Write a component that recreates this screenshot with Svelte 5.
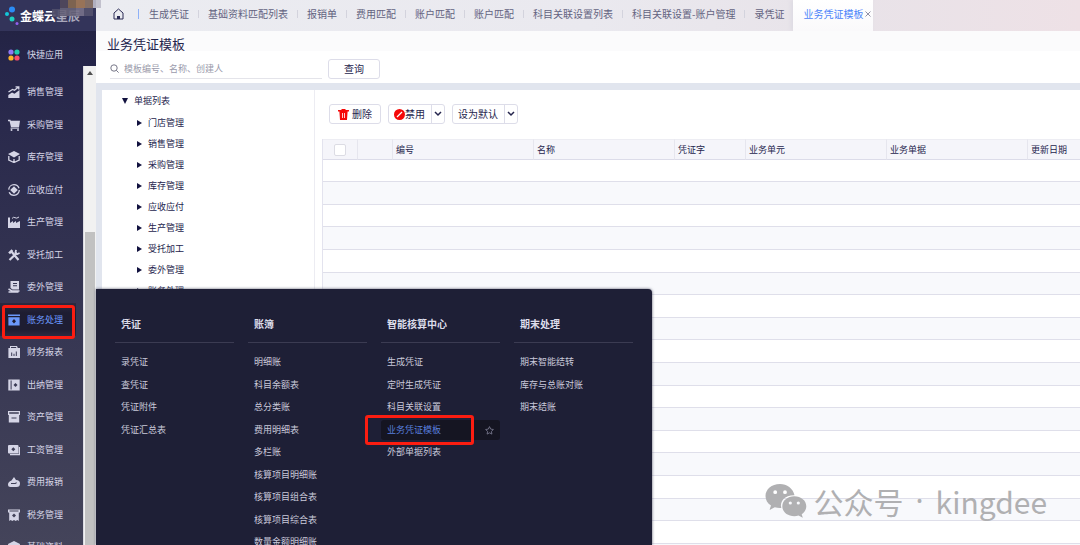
<script lang="ts">
  interface MenuGroup {
    title: string;
    items: string[];
  }

  const tabs = [
    '生成凭证',
    '基础资料匹配列表',
    '报销单',
    '费用匹配',
    '账户匹配',
    '账户匹配',
    '科目关联设置列表',
    '科目关联设置-账户管理',
    '录凭证'
  ];

  const modules = [
    { name: '销售管理', icon: 'sales' },
    { name: '采购管理', icon: 'cart' },
    { name: '库存管理', icon: 'box' },
    { name: '应收应付', icon: 'cycle' },
    { name: '生产管理', icon: 'factory' },
    { name: '受托加工', icon: 'tools' },
    { name: '委外管理', icon: 'hand' },
    { name: '账务处理', icon: 'ledger' },
    { name: '财务报表', icon: 'report' },
    { name: '出纳管理', icon: 'safe' },
    { name: '资产管理', icon: 'archive' },
    { name: '工资管理', icon: 'wage' },
    { name: '费用报销', icon: 'expense' },
    { name: '税务管理', icon: 'tax' },
    { name: '基础资料', icon: 'base' }
  ];

  const tree = [
    '门店管理',
    '销售管理',
    '采购管理',
    '库存管理',
    '应收应付',
    '生产管理',
    '受托加工',
    '委外管理',
    '账务处理'
  ];

  const groups: MenuGroup[] = [
    { title: '凭证', items: ['录凭证', '查凭证', '凭证附件', '凭证汇总表'] },
    {
      title: '账簿',
      items: [
        '明细账',
        '科目余额表',
        '总分类账',
        '费用明细表',
        '多栏账',
        '核算项目明细账',
        '核算项目组合表',
        '核算项目综合表',
        '数量金额明细账'
      ]
    },
    {
      title: '智能核算中心',
      items: ['生成凭证', '定时生成凭证', '科目关联设置', '业务凭证模板', '外部单据列表']
    },
    { title: '期末处理', items: ['期末智能结转', '库存与总账对账', '期末结账'] }
  ];

  const columns = ['编号', '名称', '凭证字', '业务单元', '业务单据', '更新日期'];
  const emptyRows = Array.from({ length: 18 }, (_, i) => i);

  let activeModule = $state('账务处理');
  let activePage = $state('业务凭证模板');
  let keyword = $state('');
  let allChecked = $state(false);
</script>

{#snippet moduleIcon(name: string)}
  <svg class="icon" width="12" height="12" viewBox="0 0 12 12" fill="currentColor" aria-hidden="true">
    {#if name === 'sales'}
      <path d="M.3 12V9L4 6.500l2.500 1.200L11.500 4v8z" />
      <path d="M.5 6 4.500 3.500l2 .8L10.500 1M7.500 .8H10.800V3.500" fill="none" stroke="currentColor" stroke-width="1.300" />
    {:else if name === 'cart'}
      <path d="M0 .8h2.400l.4 1H12l-1 6.400H3L1.600 2.200H0z" />
      <path d="M2.500 9.200H11" stroke="currentColor" />
      <circle cx="3.500" cy="11" r="1" /><circle cx="10" cy="11" r="1" />
    {:else if name === 'box'}
      <path d="M6 0 12 3 6 6.500 0 3z" />
      <path d="M.8 5v4L6 11.500 11.200 9V5M6 8v3.500" fill="none" stroke="currentColor" stroke-width="1.300" />
    {:else if name === 'cycle'}
      <circle cx="6" cy="6" r="5.300" fill="none" stroke="currentColor" stroke-width="1.300" stroke-dasharray="14 2.600" />
      <path d="M6 2.200 9.800 6 6 9.800 2.200 6z" />
    {:else if name === 'factory'}
      <path d="M0 12V1.500h2V7l3-2v2l3-2v2l4-2v7z" />
      <path d="M4 2.500q1.500-2 3-.8T11 1" fill="none" stroke="currentColor" />
    {:else if name === 'tools'}
      <path d="M1.500 11 9 3.800M3 2l7.500 9" stroke="currentColor" stroke-width="2.200" />
      <path d="M.2 3.500 3.500.2 5.200 2 2 5.200z" />
      <path d="M8 .8 7.400 4 9 5.200 11.600 4" fill="none" stroke="currentColor" stroke-width="1.800" />
    {:else if name === 'hand'}
      <path fill-rule="evenodd" d="M2.500 0H11v8.500H4.500L2.500 7zm2.500 2v1h4V2zm0 2.300v1h4v-1z" />
      <path d="M.5 8 4 10h7.500M.5 10.900h10" fill="none" stroke="currentColor" stroke-width="1.500" />
    {:else if name === 'ledger'}
      <path d="M0 .5h12V2H0z" />
      <path fill-rule="evenodd" d="M.4 3.200h11.200v8.300H.4zM6 5 4 7.200l2 2.200 2-2.200z" />
    {:else if name === 'report'}
      <path fill-rule="evenodd" d="M2 0h7l.8 2H12v10H.4V2H2zm1.200 6.500V10h1V6.500zm2.300 1.200V10h1V7.700zM7.800 5.500V10h1V5.500zM3 1v1h5.400L8 1z" />
    {:else if name === 'safe'}
      <path fill-rule="evenodd" d="M.3.5h11.400v11H.3zM2.600 1.500v9h1v-9zM7.500 4 5.500 6l2 2 2-2z" />
    {:else if name === 'archive'}
      <path d="M.6.6h10.800v2.800H.6z" fill="none" stroke="currentColor" stroke-width="1.200" />
      <path fill-rule="evenodd" d="M.8 4h10.400v7.500H.8zm2.700 2.500v1h5v-1z" />
    {:else if name === 'wage'}
      <path fill-rule="evenodd" d="M1 1h8.500q1 0 1 1v7.500H1q-1 0-1-1V2q0-1 1-1zM5.300 3.300l-2 2 2 2 2-2z" />
      <path d="M2 10.700h9.400V3" fill="none" stroke="currentColor" stroke-width="1.200" />
    {:else if name === 'expense'}
      <path fill-rule="evenodd" d="M3.500 4.500 6 1l2 3q4 0 4 3.500T8.500 11h-6Q0 11 0 8.500t3.500-4zM3 7v1h4.500l1.500-1-.6-.8L7 7z" />
    {:else if name === 'tax'}
      <path fill-rule="evenodd" d="M0 .5h12v3h-1.200V12L9.300 11l-1.600 1L6 11l-1.700 1-1.600-1-1.500 1V3.500H0zM1.500 1.600v.8h9v-.8zM6 4.500l-2 2 2 2 2-2z" />
    {:else}
      <path d="M6 0l6 3-1 8H1L0 3z" />
    {/if}
  </svg>
{/snippet}

{#snippet chevron()}
  <svg width="8" height="6" viewBox="0 0 8 6" fill="none" stroke="currentColor" stroke-width="1.500" aria-hidden="true">
    <path d="M1 1l3 3 3-3" />
  </svg>
{/snippet}

<div class="app">
  <aside class="sidebar">
    <div class="brand">
      <svg width="14" height="20" viewBox="0 0 14 20" aria-hidden="true">
        <circle cx="7" cy="3.500" r="3" fill="#2b8cf5" />
        <circle cx="2" cy="8" r="2" fill="#14c6d8" />
        <circle cx="7" cy="13" r="2.500" fill="#1fd0c0" />
        <circle cx="12" cy="17.500" r="1.500" fill="#9160ee" />
      </svg>
      <strong>金蝶云<span>星辰</span></strong>
      <svg class="mosaic" width="50" height="24" viewBox="0 0 50 24" aria-hidden="true">
        <path fill="#51506c" d="M0 9h8v8H0z" />
        <path fill="#51485c" d="M8 0h8v8H8z" />
        <path fill="#86694f" d="M16 0h8v8h-8z" />
        <path fill="#a37a58" d="M24 0h9v8h-9z" />
        <path fill="#8d7668" d="M33 0h8v8h-8z" />
        <path fill="#bebdca" d="M41 0h8v8h-8z" />
        <path fill="#67637a" d="M8 8h16v8H8z" />
        <path fill="#77728a" d="M24 8h8v8h-8z" />
        <path fill="#55536e" d="M32 8h9v8h-9z" />
      </svg>
    </div>
    <a class="module quick" href="#apps">
      <svg class="icon" width="12" height="12" viewBox="0 0 12 12" aria-hidden="true">
        <circle cx="3" cy="3" r="2.600" fill="#8d78f5" />
        <circle cx="9" cy="3" r="2.600" fill="#1fcbb0" />
        <circle cx="3" cy="9" r="2.600" fill="#fbb429" />
        <circle cx="9" cy="9" r="2.600" fill="#fa4d6c" />
      </svg>
      快捷应用
    </a>
    <div class="module-area">
      <nav class="modules" aria-label="模块">
        {#each modules as item}
          <a
            class="module"
            class:active={item.name === activeModule}
            href="#{item.icon}"
            onclick={() => (activeModule = item.name)}
          >
            {@render moduleIcon(item.icon)}
            {item.name}
          </a>
        {/each}
      </nav>
      <div class="scrollbar">
        <svg width="6" height="4" viewBox="0 0 6 4" aria-hidden="true"><path fill="#505050" d="M3 0l3 4H0z" /></svg>
        <div class="thumb"></div>
      </div>
    </div>
  </aside>

  <main class="main">
    <nav class="tabs" aria-label="标签页">
      <button type="button" class="home" aria-label="首页">
        <svg width="11" height="12" viewBox="0 0 11 12" fill="none" stroke="#2a2a55" aria-hidden="true">
          <path d="M1 5 5.500 1 10 5v6H1z" stroke-linejoin="round" />
          <path d="M4 8h3v3H4z" fill="#2a2a55" stroke="none" />
        </svg>
      </button>
      <span class="bar first"></span>
      {#each tabs as tab, i}
        {#if i > 0}<span class="bar"></span>{/if}
        <button type="button" class="tab">{tab}</button>
      {/each}
      <div class="tab-current">
        <button type="button" class="tab">业务凭证模板</button>
        <button type="button" class="close" aria-label="关闭">
          <svg width="6" height="6" viewBox="0 0 6 6" stroke="#85859b" stroke-width=".9" aria-hidden="true">
            <path d="M.5.5l5 5M5.500.5l-5 5" />
          </svg>
        </button>
      </div>
    </nav>

    <header class="page-head">
      <h1>业务凭证模板</h1>
      <form class="search" onsubmit={(e) => e.preventDefault()}>
        <label class="field">
          <svg width="9" height="9" viewBox="0 0 9 9" fill="none" stroke="#777788" aria-hidden="true">
            <circle cx="4" cy="4" r="3.200" /><path d="M6.300 6.300 8.600 8.600" />
          </svg>
          <input type="text" placeholder="模板编号、名称、创建人" aria-label="搜索" bind:value={keyword} />
        </label>
        <button type="submit" class="btn query">查询</button>
      </form>
    </header>

    <div class="workspace">
      <section class="tree">
        <button type="button" class="node root">
          <svg width="6" height="6" viewBox="0 0 6 6" aria-hidden="true"><path fill="#12123f" d="M0 0h6L3 6z" /></svg>
          单据列表
        </button>
        {#each tree as node}
          <button type="button" class="node">
            <svg width="5" height="6" viewBox="0 0 5 6" aria-hidden="true"><path fill="#12123f" d="M0 0v6l5-3z" /></svg>
            {node}
          </button>
        {/each}
      </section>

      <section class="list">
        <div class="toolbar">
          <button type="button" class="btn">
            <svg width="11" height="11" viewBox="0 0 11 11" aria-hidden="true">
              <path fill="#f50808" fill-rule="evenodd" d="M3.500 0h4v1H11v1.500H9.600L9 11H2L1.400 2.500H0V1h3.500zM4 4v5h.8V4zm2.200 0v5H7V4z" />
            </svg>
            删除
          </button>
          <div class="split">
            <button type="button" class="ban">
              <svg width="11" height="11" viewBox="0 0 11 11" aria-hidden="true">
                <circle cx="5.500" cy="5.500" r="5.500" fill="#f50808" />
                <path d="M3 8l5-5" stroke="#fff" stroke-width="1.200" />
              </svg>
              禁用
            </button>
            <button type="button" class="more" aria-label="更多禁用操作">{@render chevron()}</button>
          </div>
          <div class="split">
            <button type="button">设为默认</button>
            <button type="button" class="more" aria-label="更多默认操作">{@render chevron()}</button>
          </div>
        </div>

        <table>
          <colgroup>
            <col class="w-check" />
            <col class="w-check" />
            <col class="w-wide" />
            <col class="w-wide" />
            <col class="w-narrow" />
            <col class="w-wide" />
            <col class="w-wide" />
            <col />
          </colgroup>
          <thead>
            <tr>
              <th class="check"><input type="checkbox" aria-label="全选" bind:checked={allChecked} /></th>
              <th></th>
              {#each columns as column}
                <th>{column}</th>
              {/each}
            </tr>
          </thead>
          <tbody>
            {#each emptyRows as row (row)}
              <tr><td colspan="8"></td></tr>
            {/each}
          </tbody>
        </table>
      </section>
    </div>

    <!-- Flyout of the active module -->
    <div class="flyout">
      {#each groups as group}
        <section>
          <h2>{group.title}</h2>
          <ul>
            {#each group.items as item}
              <li class:current={item === activePage}>
                <a href="#page" onclick={() => (activePage = item)}>{item}</a>
                {#if item === activePage}
                  <button type="button" class="star" aria-label="收藏">
                    <svg width="9" height="9" viewBox="0 0 9 9" fill="none" stroke="currentColor" stroke-width=".9" aria-hidden="true">
                      <path d="M4.500.6l1.200 2.500 2.700.4-2 1.900.5 2.700-2.400-1.300-2.400 1.300.5-2.700-2-1.900 2.700-.4z" />
                    </svg>
                  </button>
                  <span class="mark page-mark"></span>
                {/if}
              </li>
            {/each}
          </ul>
        </section>
      {/each}
    </div>

    <div class="watermark">
      <svg width="42" height="34" viewBox="0 0 42 34" aria-hidden="true">
        <path fill="#b0b0b2" fill-rule="evenodd" d="M15 0C6.500 0 .5 5.500.5 12c0 4 2 7.300 5.500 9.600L4.500 26l5.300-2.700c1.700.5 3.400.8 5.200.8h1.300C14.500 17 20 11 29.500 11.200 28 4.500 22 0 15 0zM10.200 6.300a1.900 1.900 0 1 1 0 3.800 1.900 1.900 0 0 1 0-3.800zm9.800 0a1.900 1.900 0 1 1 0 3.800 1.900 1.900 0 0 1 0-3.800z" />
        <path fill="#b0b0b2" fill-rule="evenodd" d="M29.300 12.200c-6.800 0-12 4.400-12 10 0 5.700 5.200 10 12 10 1.500 0 2.900-.2 4.200-.6l4.300 2.200-1.100-3.600c2.900-2 4.600-4.800 4.600-8 0-5.600-5.200-10-12-10zm-4 5.200a1.600 1.600 0 1 1 0 3.200 1.600 1.600 0 0 1 0-3.200zm8 0a1.600 1.600 0 1 1 0 3.200 1.600 1.600 0 0 1 0-3.200z" />
      </svg>
      <p><span>公众号</span><span class="dot">·</span><span>kingdee</span></p>
    </div>
  </main>
  <span class="mark module-mark"></span>
</div>

<style>
  :global(body) {
    margin: 0;
    overflow: hidden;
  }

  .app {
    position: relative;
    display: flex;
    height: 100vh;
    overflow: hidden;
    background: #e1e5ee;
    color: #25254d;
    font-family: "Noto Sans CJK SC", sans-serif;
    font-size: 9px;
    line-height: 14px;
  }

  .app :global(*) {
    box-sizing: border-box;
  }

  svg {
    display: block;
    flex-shrink: 0;
  }

  button {
    padding: 0;
    border: 0;
    background: none;
    color: inherit;
    font: inherit;
    white-space: nowrap;
    cursor: pointer;
  }

  a {
    color: inherit;
    text-decoration: none;
  }

  /* Sidebar */
  .sidebar {
    display: flex;
    flex: 0 0 96px;
    flex-direction: column;
    background: linear-gradient(#21213f, #26264a 12%, #44445a);
    color: #d5d5e6;
  }

  .brand {
    position: relative;
    z-index: 3;
    display: flex;
    flex: 0 0 31px;
    align-items: center;
    gap: 1px;
    padding-left: 5px;
    background: #33345a;
    color: #fff;
    font-size: 12px;
    line-height: 18px;
  }

  .brand strong {
    white-space: nowrap;
  }

  .brand span {
    color: #a9a8bb;
  }

  .mosaic {
    position: absolute;
    top: 0;
    left: 52px;
    opacity: 0.9;
  }

  .module {
    display: flex;
    flex-shrink: 0;
    align-items: center;
    gap: 7px;
    height: 32px;
    padding-left: 8px;
    white-space: nowrap;
  }

  .module:nth-child(even) {
    height: 33px;
  }

  .module.quick {
    height: 35px;
    padding-top: 12px;
  }

  .module.active {
    background: linear-gradient(#2b2a41, #1e1d32 30%, #1e1d32 80%, #2b2a41);
    color: #6b98fa;
  }

  .module-area {
    display: flex;
    flex: 1;
    min-height: 0;
  }

  .modules {
    display: flex;
    flex: 1;
    flex-direction: column;
    padding: 10px 7px 0 0;
    overflow: hidden;
  }

  .scrollbar {
    display: flex;
    flex: 0 0 13px;
    flex-direction: column;
    align-items: center;
    justify-content: space-between;
    padding: 5px 1px 0;
    border-left: 1px solid #dcdce2;
    background: #f1f1f1;
  }

  .thumb {
    width: 10px;
    height: 66%;
    background: #c1c1c1;
  }

  /* Tabs */
  .main {
    position: relative;
    display: flex;
    flex: 1;
    flex-direction: column;
    min-width: 0;
  }

  .tabs {
    display: flex;
    flex: 0 0 31px;
    align-items: center;
    padding: 0 0 3px 17px;
    background: linear-gradient(90deg, #ebecf1, #eae9ef 50%, #e8e3e9 75%, #eee1e6);
    color: #63637f;
    font-size: 10px;
    overflow: hidden;
  }

  .bar {
    flex: 0 0 1px;
    height: 8px;
    margin: 0 9px;
    background: #d3d3dd;
  }

  .bar.first {
    height: 10px;
    margin: 0 10px 0 14px;
    background: #8fb1f8;
  }

  .tab-current {
    display: flex;
    align-items: center;
    align-self: stretch;
    gap: 2px;
    margin: 0 0 -3px 9px;
    padding: 0 2px 3px 10px;
    background: linear-gradient(#fff, #faf9fb);
    box-shadow: -2px 0 4px #dcdae2;
    color: #4c84fa;
  }

  /* Page head */
  .page-head {
    flex-shrink: 0;
    padding: 4px 12px 3px 11px;
    background: linear-gradient(#fbfbfc 20px, #fff 20px);
  }

  h1 {
    margin: 0;
    font-size: 13px;
    font-weight: 400;
    line-height: 18px;
  }

  .search {
    display: flex;
    align-items: center;
    gap: 6px;
    padding: 6px 0 1px 3px;
  }

  .field {
    display: flex;
    flex: 0 1 212px;
    align-items: center;
    gap: 5px;
    height: 20px;
    border-bottom: 1px solid #e4e4ea;
  }

  .field input {
    flex: 1;
    min-width: 0;
    padding: 0;
    border: 0;
    outline: 0;
    background: none;
    color: inherit;
    font: inherit;
  }

  .field input::placeholder {
    color: #9a9aab;
    opacity: 1;
  }

  .btn,
  .split {
    display: flex;
    align-items: center;
    height: 20px;
    border: 1px solid #dddde9;
    border-radius: 3px;
    background: #fff;
    font-size: 10px;
  }

  .btn {
    gap: 3px;
    padding: 0 8px;
  }

  .btn.query {
    padding: 0 15px;
  }

  .split button {
    display: flex;
    align-items: center;
    height: 18px;
    padding: 0 6px 0 5px;
  }

  .split .more {
    width: 13px;
    padding: 0;
    justify-content: center;
    border-left: 1px solid #dddde9;
  }

  /* Workspace */
  .workspace {
    display: flex;
    flex: 1;
    min-height: 0;
    padding: 7px 0 0 6px;
  }

  .tree {
    display: flex;
    flex: 0 0 213px;
    flex-direction: column;
    align-items: flex-start;
    border-right: 1px solid #ececf2;
    background: #fff;
    overflow: hidden;
  }

  .node {
    display: flex;
    flex-shrink: 0;
    align-items: center;
    gap: 6px;
    height: 21px;
    padding-left: 35px;
  }

  .node.root {
    height: 22px;
    padding-left: 20px;
  }

  .list {
    flex: 1;
    min-width: 0;
    padding: 14px 0 0 7px;
    background: #fff;
    overflow: hidden;
  }

  .toolbar {
    display: flex;
    gap: 7px;
    padding: 0 0 15px 7px;
  }

  table {
    width: 100%;
    min-width: 847px;
    table-layout: fixed;
    border-spacing: 0;
    border-left: 1px solid #e3e3ee;
  }

  .w-check {
    width: 35px;
  }

  .w-wide {
    width: 141px;
  }

  .w-narrow {
    width: 71px;
  }

  th {
    height: 21px;
    padding: 0 3px;
    border-top: 1px solid #ededf3;
    border-right: 1px solid #e6e6ee;
    border-bottom: 1px solid #dcdce9;
    background: #f5f5fa;
    font-weight: 400;
    text-align: left;
  }

  th.check {
    padding: 0 0 0 11px;
  }

  th input {
    display: block;
    appearance: none;
    width: 12px;
    height: 12px;
    margin: 0;
    border: 1px solid #dcdce4;
    border-radius: 2px;
    background: #fff;
  }

  td {
    height: 23px;
    padding: 0;
    border-bottom: 1px solid #dfdfea;
  }

  tr:nth-child(5n + 1) td,
  tr:nth-child(5n + 3) td {
    height: 22px;
  }

  tr:nth-child(even) td {
    background: #f8f9fc;
  }

  /* Flyout */
  .flyout {
    position: absolute;
    top: 289px;
    bottom: 0;
    left: 0;
    z-index: 2;
    display: grid;
    grid-template-columns: repeat(4, 1fr);
    gap: 14px;
    width: 556px;
    padding: 26px 19px 0;
    border-top-right-radius: 4px;
    background: #1e1f36;
    box-shadow: 0 0 3px #55566a;
    color: #c9c9da;
    overflow: hidden;
  }

  h2 {
    margin: 0;
    padding: 0 6px 10px;
    border-bottom: 1px solid #3b3b52;
    color: #dcdcea;
    font-size: 10px;
    font-weight: 700;
    line-height: 17px;
  }

  ul {
    margin: 0;
    padding: 9px 0 0;
    list-style: none;
  }

  li {
    position: relative;
    display: flex;
    align-items: center;
    justify-content: space-between;
    height: 20px;
    margin-bottom: 3px;
    padding: 0 6px;
    border-radius: 3px;
    white-space: nowrap;
  }

  li:nth-child(even) {
    margin-bottom: 2px;
  }

  li.current {
    background: #151522;
    color: #587fdc;
  }

  .star {
    color: #77778c;
  }

  /* Callout frames */
  .mark {
    position: absolute;
    border: 3px solid #fb1d11;
    border-radius: 3px;
    pointer-events: none;
  }

  .page-mark {
    inset: -5px 26px -5px -16px;
  }

  .module-mark {
    top: 305px;
    left: 2px;
    z-index: 3;
    width: 73px;
    height: 34px;
  }

  .watermark {
    position: absolute;
    right: 33px;
    bottom: 22px;
    display: flex;
    align-items: center;
    gap: 7px;
    color: #b0b0b2;
    font-size: 30px;
    line-height: 44px;
    white-space: nowrap;
  }

  .watermark p {
    display: flex;
    gap: 12px;
    margin: 0;
  }

  .dot {
    font-family: "Noto Sans", sans-serif;
  }
</style>
